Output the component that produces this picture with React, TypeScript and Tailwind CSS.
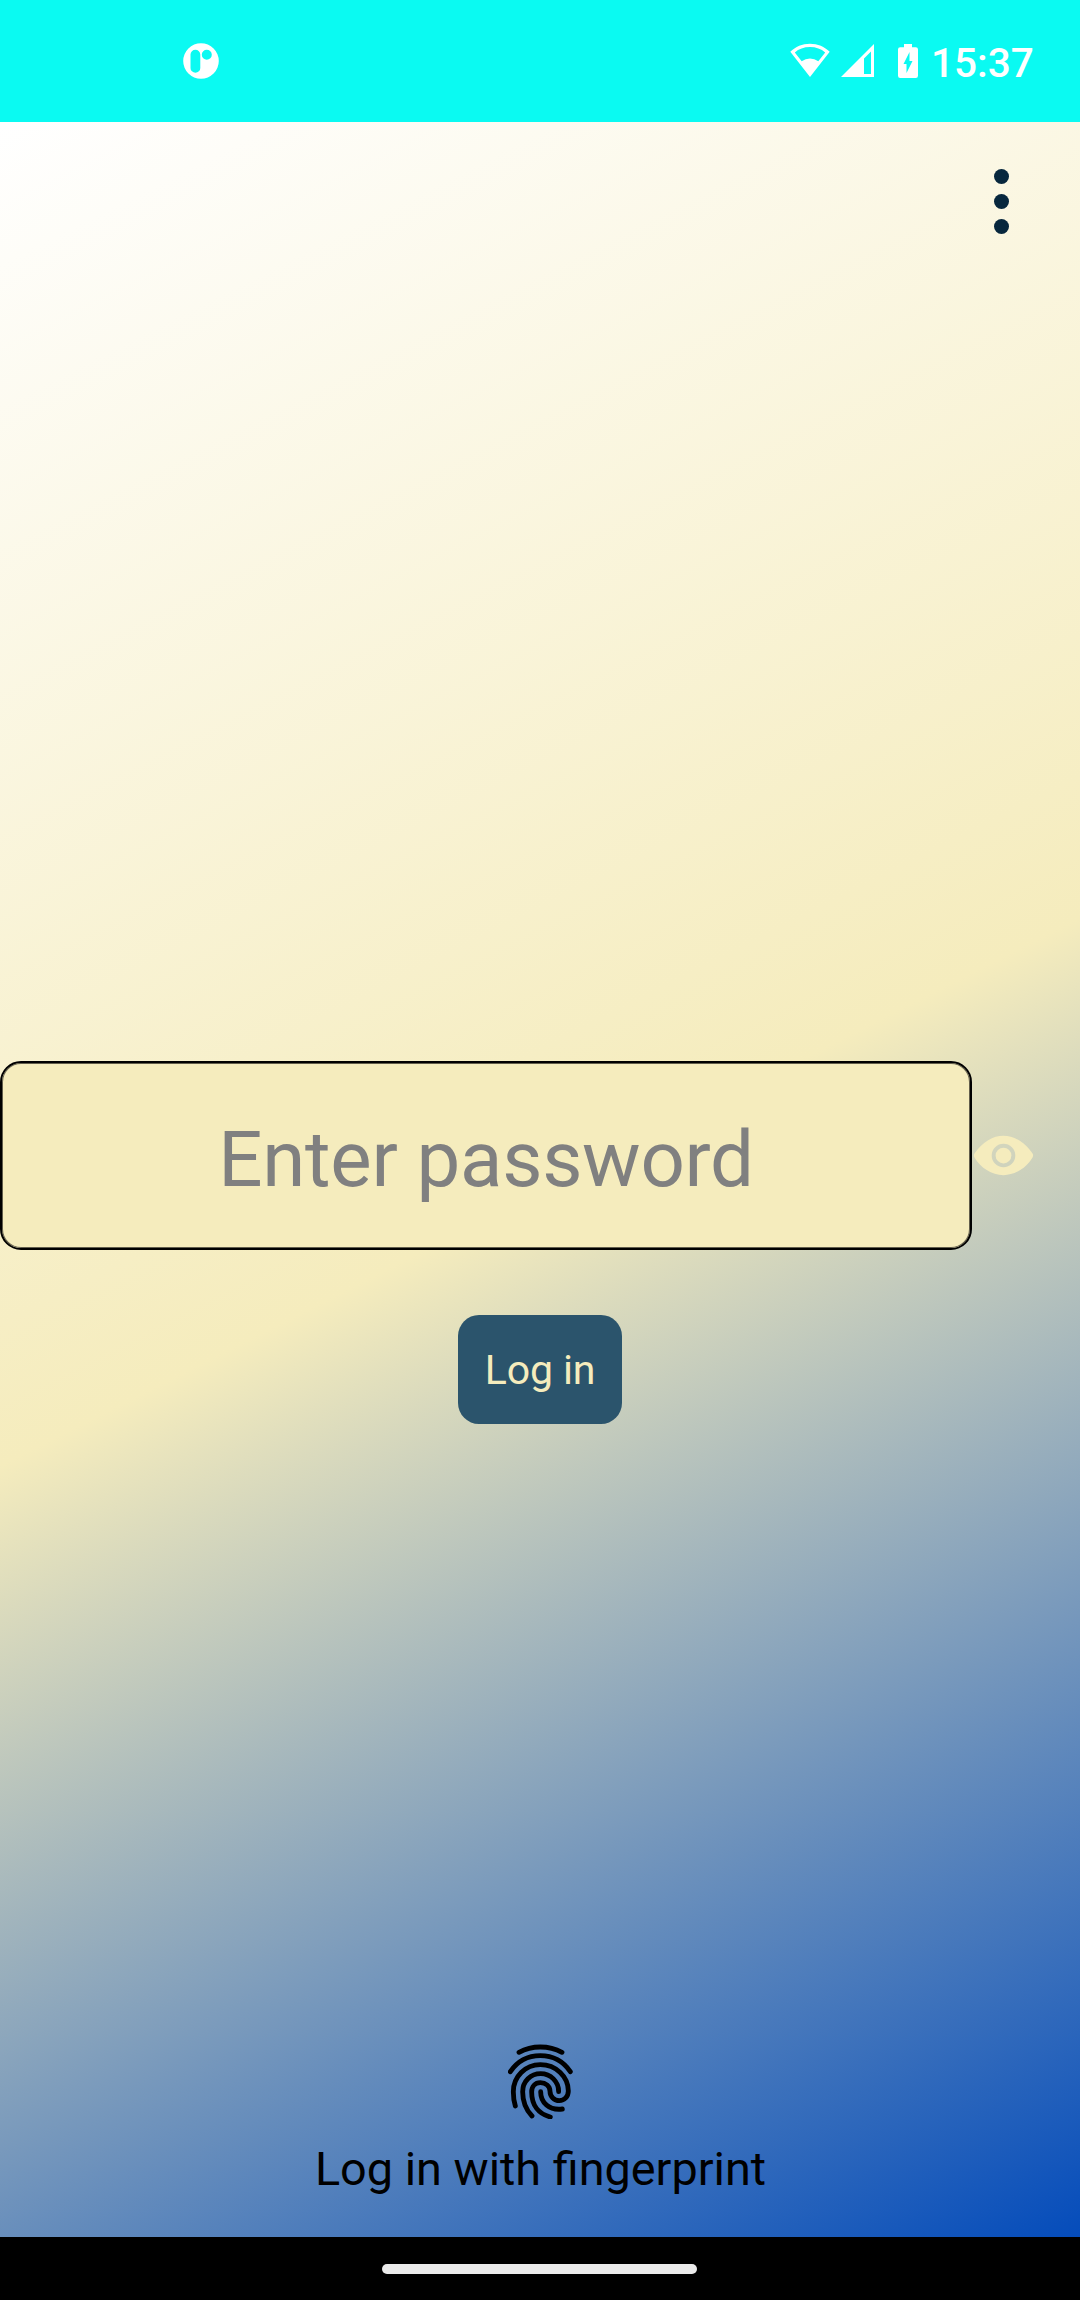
import { IoEye } from "react-icons/io5";

function StatusBar() {
  return (
    <header className="flex h-[122px] shrink-0 items-start bg-[#0afaf2] text-white">
      <svg className="mt-[43px] ml-[183px] size-9" viewBox="0 0 36 36">
        <path
          fill="currentColor"
          fillRule="evenodd"
          d="M18 .2a17.8 17.8 0 1 1 0 35.6a17.8 17.8 0 1 1 0-35.6zM12.4 6.7a4.9 4.9 0 0 0-4.9 4.9v13.3a4.9 4.9 0 0 0 9.8 0V11.6a4.9 4.9 0 0 0-4.9-4.9zM23.8 6.7a5 5 0 1 0 0 10a5 5 0 1 0 0-10z"
        />
      </svg>
      <svg className="mt-[43px] ml-[571px] h-[35px] w-[40px]" viewBox="0 0 40 35">
        <path
          fill="currentColor"
          fillRule="evenodd"
          d="M20 .7C12.300.7 5.400 3.600 .3 8.800L20 34L39.700 8.800C34.600 3.600 27.700 .7 20 .7zM20 4C26 4 31.200 6 35.200 9.400L28.300 18.200A14 14 0 0 0 11.700 18.200L4.800 9.400C8.800 6 14 4 20 4z"
        />
      </svg>
      <svg className="mt-[44px] ml-[11px] h-[33px] w-[34px]" viewBox="0 0 34 33">
        <path fill="currentColor" fillRule="evenodd" d="M33 0V33H0zM30 7.500L23 14.500V30H30z" />
      </svg>
      <svg className="mt-[44px] ml-[23px] h-[34px] w-[20px]" viewBox="0 0 20 34">
        <path
          fill="currentColor"
          fillRule="evenodd"
          d="M6 0H14V3.200H17.800A2.200 2.200 0 0 1 20 5.400V31.800A2.200 2.200 0 0 1 17.800 34H2.200A2.200 2.200 0 0 1 0 31.800V5.400A2.200 2.200 0 0 1 2.200 3.200H6zM11.500 8L5.500 20H8.500V29L14.500 17H11.500z"
        />
      </svg>
      <time className="mt-[39px] ml-[13px] text-[40.500px] leading-[48px] font-medium">15:37</time>
    </header>
  );
}

function OverflowMenu() {
  return (
    <button aria-label="Menu" className="mt-[47px] mr-[71px] flex flex-col gap-[10px] self-end">
      <span className="size-[15px] rounded-full bg-[#07273d]" />
      <span className="size-[15px] rounded-full bg-[#07273d]" />
      <span className="size-[15px] rounded-full bg-[#07273d]" />
    </button>
  );
}

function Fingerprint() {
  return (
    <svg
      className="h-[75.330px] w-[64.670px]"
      viewBox="84 70 194 226"
      fill="none"
      stroke="currentColor"
      strokeWidth="14.500"
      strokeLinecap="round"
    >
      <path d="M117 95C137 84 158 79 181 79S226 84 246 95" />
      <path d="M91 153C112 122 145 105 181 105S250 122 271 153" />
      <path d="M106 256C102 243 100 229 100 213C100 168 136 132 181 132C228 132 265 168 265 211C265 228 253 240 238 240S210 228 210 212S197 186 181 186S155 198 155 214C155 254 176 280 211 289" />
      <path d="M156 286C137 266 128 244 128 213C128 182 152 159 182 159S236 183 236 213" />
      <path d="M182 213C182 246 208 270 247 265" />
    </svg>
  );
}

export default function App() {
  return (
    <div className="flex h-[2300px] w-[1080px] flex-col overflow-hidden font-['Roboto',sans-serif]">
      <StatusBar />
      <main className="flex flex-1 flex-col bg-[linear-gradient(153.100deg,#ffffff_0%,#f5ecbd_50%,#0049bb_100%)] bg-[length:1080px_2140px] bg-no-repeat">
        <OverflowMenu />
        <div className="mt-[827px] flex items-center">
          <input
            type="text"
            placeholder="Enter password"
            className="h-[189px] w-[972px] rounded-[21px] border-2 border-black bg-[#f5ecbd] pt-[8px] text-center text-[78px] tracking-[-0.300px] text-gray-900 shadow-[inset_0_0_0_1px_rgba(0,0,0,0.6)] placeholder:text-[#808080]"
          />
          <IoEye className="size-[63px] text-[#f5ecbd]" />
        </div>
        <button className="mt-[65px] flex h-[109px] w-[164px] items-center justify-center self-center rounded-[21px] bg-[#2b546c] pt-[3px] text-[41px] tracking-[-0.100px] text-[#f5ecbd]">
          Log in
        </button>
        <button className="mt-auto mb-[40px] flex flex-col items-center gap-[22px] self-center pl-px text-black">
          <Fingerprint />
          <span className="text-[46.800px] leading-[56px]">Log in with fingerprint</span>
        </button>
      </main>
      <footer className="flex h-[63px] shrink-0 justify-center bg-black pt-[27px] pr-px">
        <div className="h-[10px] w-[315px] rounded-full bg-[#ebebeb]" />
      </footer>
    </div>
  );
}
